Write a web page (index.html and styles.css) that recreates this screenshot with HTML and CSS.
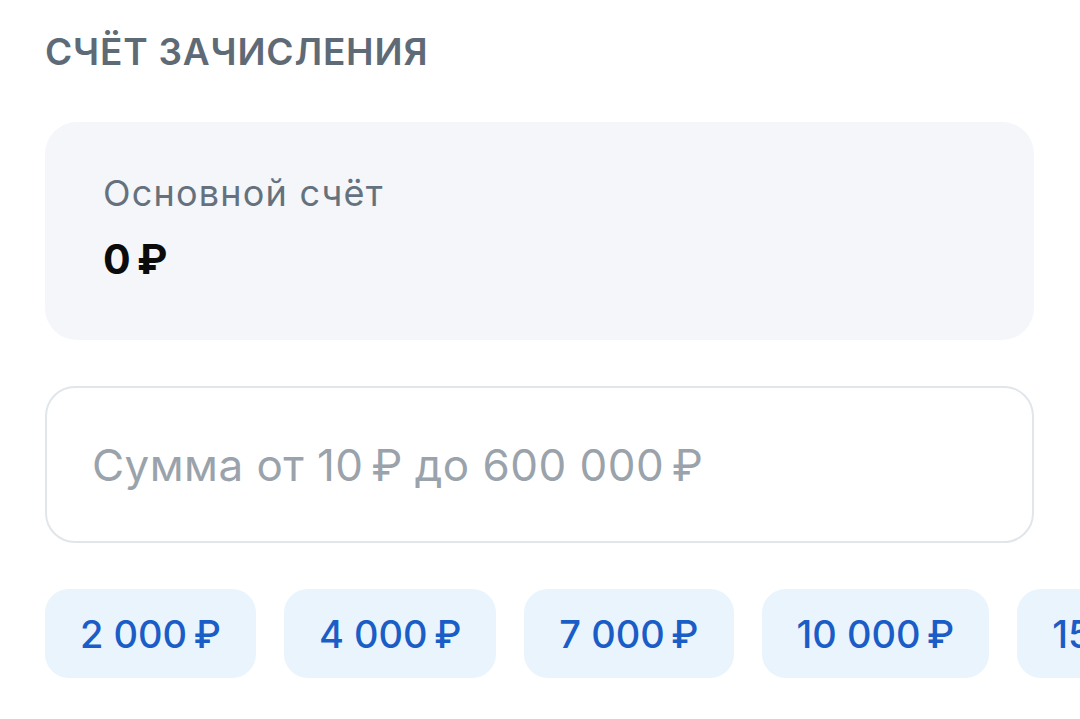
FILE: index.html
```html
<!DOCTYPE html>
<html lang="ru">
<head>
<meta charset="utf-8">
<link rel="stylesheet" href="styles.css">
</head>
<body>
<div class="sheet">
  <h2 class="title">СЧЁТ ЗАЧИСЛЕНИЯ</h2>
  <div class="account">
    <div class="account-name">Основной счёт</div>
    <div class="account-balance">0&#8239;₽</div>
  </div>
  <div class="amount-field">
    <span class="placeholder">Сумма от 10&#8239;₽ до 600&nbsp;000&#8239;₽</span>
  </div>
  <div class="chips">
    <div class="chip"><span class="chip-label">2&nbsp;000&#8239;₽</span></div>
    <div class="chip"><span class="chip-label">4&nbsp;000&#8239;₽</span></div>
    <div class="chip"><span class="chip-label">7&nbsp;000&#8239;₽</span></div>
    <div class="chip"><span class="chip-label">10&nbsp;000&#8239;₽</span></div>
    <div class="chip"><span class="chip-label">15&nbsp;000&#8239;₽</span></div>
  </div>
</div>
</body>
</html>
```

FILE: styles.css
```css
* { box-sizing: border-box; }
html, body { margin: 0; padding: 0; }
body {
  background: #ffffff;
  font-family: "Inter", "Noto Sans", sans-serif;
  width: 1080px;
  height: 719px;
  overflow: hidden;
}
.sheet {
  padding: 26px 46px 0 45px;
}
.title {
  margin: 0;
  font-size: 37px;
  font-weight: 600;
  line-height: 52px;
  color: #5e6a76;
  letter-spacing: 0.8px;
}
.account {
  margin-top: 44px;
  height: 218px;
  background: #f4f6f9;
  border-radius: 32px;
  padding: 49px 58px 0;
}
.account-name {
  font-size: 36px;
  line-height: 44px;
  color: #65717d;
  letter-spacing: 1.2px;
}
.account-balance {
  margin-top: 20px;
  font-size: 41px;
  font-weight: 700;
  line-height: 48px;
  color: #0b0b0b;
}
.amount-field {
  margin-top: 46px;
  height: 157px;
  border: 2px solid #e1e6ea;
  border-radius: 30px;
  display: flex;
  align-items: center;
  padding-left: 45px;
}
.placeholder {
  font-size: 44px;
  color: #9aa3ab;
  line-height: 52px;
  letter-spacing: 0.45px;
}
.chips {
  margin-top: 46px;
  display: flex;
  gap: 28px;
  margin-right: -46px;
  overflow: hidden;
}
.chip {
  flex: none;
  height: 89px;
  padding: 0 35px;
  display: flex;
  align-items: center;
  background: #e9f4fd;
  border-radius: 24px;
}
.chip-label {
  font-size: 38px;
  font-weight: 500;
  color: #1b5dc6;
  letter-spacing: 1.7px;
  white-space: nowrap;
}
```
